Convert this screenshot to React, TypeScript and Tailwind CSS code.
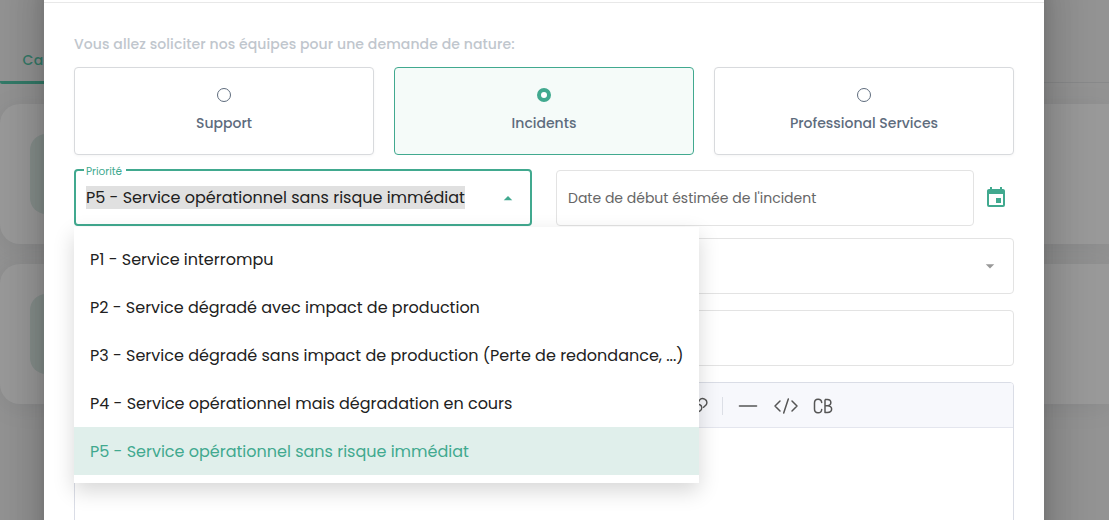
import { useState } from "react";

const PRIORITIES = [
  "P1 - Service interrompu",
  "P2 - Service dégradé avec impact de production",
  "P3 - Service dégradé sans impact de production (Perte de redondance, ...)",
  "P4 - Service opérationnel mais dégradation en cours",
  "P5 - Service opérationnel sans risque immédiat",
];

const NATURES = ["Support", "Incidents", "Professional Services"];

function BackgroundPage() {
  return (
    <div className="flex h-full flex-col bg-[#f5f5f5]">
      <div className="flex h-[83px] shrink-0 items-end border-b border-[#e3e5e7]">
        <div className="-mb-[2px] flex h-[46px] w-[180px] items-center rounded-l-[2px] border-b-[3px] border-[#55cbae] pt-[2px] pl-[22.5px] text-[14px] font-medium tracking-[0.5px] text-[#55cbae]">
          Cal
        </div>
      </div>
      <div className="mt-[21px] flex flex-col gap-5">
        {[0, 1].map((i) => (
          <div key={i} className="flex h-[140px] items-center rounded-l-[20px] bg-white pl-[30px] shadow-[0_4px_25px_rgba(100,110,120,0.1)]">
            <div className="h-[80px] w-[80px] rounded-[16px] bg-[#dfeeea]" />
          </div>
        ))}
      </div>
    </div>
  );
}

function NatureCard({ text, active, onSelect }: { text: string; active: boolean; onSelect: () => void }) {
  return (
    <button
      onClick={onSelect}
      className={`flex h-[88px] flex-1 flex-col items-center rounded-[4px] border pt-5 ${active ? "border-[#41a98f] bg-[#f5fbf9]" : "border-[#d8dadd] bg-white shadow-[0_1px_3px_rgba(0,0,0,0.04)]"}`}
    >
      <span className={`size-[14px] rounded-full bg-white ${active ? "border-4 border-[#41a98f]" : "border border-[#5e6c7d]"}`} />
      <span className="mt-[11px] text-[14px] leading-5 font-medium whitespace-nowrap text-[#5e6c7d]">{text}</span>
    </button>
  );
}

function PrioritySelect() {
  const [selected, setSelected] = useState(4);
  return (
    <div className="relative -mt-px flex h-[57px] w-[458px] items-center justify-between rounded-[4px] border-2 border-[#41a98f] px-[10px]">
      <span className="absolute -top-[7px] left-[8px] bg-white pr-[4px] pl-[2px] text-[10.5px] leading-4 text-[#41a98f]">Priorité</span>
      <span className="mb-px bg-[#e0e0e0] text-[16px] leading-[23px] whitespace-nowrap text-[#212121]">{PRIORITIES[selected]}</span>
      <svg viewBox="0 0 24 24" className="mt-px size-6 fill-[#41a98f]">
        <path d="M7,14.5L12,9.5L17,14.5H7Z" transform="translate(1.8 1.8) scale(.85)" />
      </svg>
      <ul className="absolute top-[56px] -left-[2px] z-10 w-[625px] bg-white py-2 shadow-[0_8px_20px_rgba(0,0,0,0.16)]">
        {PRIORITIES.map((p, i) => (
          <li
            key={p}
            onClick={() => setSelected(i)}
            className={`flex h-12 items-center px-4 pt-[2px] text-[16px] whitespace-nowrap ${i === selected ? "bg-[#e0efeb] text-[#41a98f]" : "text-[#212121]"}`}
          >
            <span>{p}</span>
          </li>
        ))}
      </ul>
    </div>
  );
}

function EditorToolbar() {
  return (
    <div className="flex h-[45px] items-center rounded-t-[3px] border-b border-[#e4e6ee] bg-[#f7f8fc] pt-[2px] pl-[613px]">
      <svg viewBox="0 0 20 24" className="h-6 w-5 fill-none stroke-[#555] stroke-[1.4]">
        <path d="M10 9 L11.5 6.2 C14 2.8 20.5 5.5 18.4 10.5 L15.6 13.2 M11.5 10.5 C14.6 12 14.4 15 12 17 L8 19" strokeLinecap="round" />
      </svg>
      <span className="ml-[14px] h-[18px] w-px bg-[#dcdfe6]" />
      <svg viewBox="0 0 20 24" className="ml-[15px] h-6 w-5 stroke-[#555] stroke-[1.6]">
        <path d="M1.5 12H18.5" strokeLinecap="round" />
      </svg>
      <svg viewBox="0 0 26 24" className="ml-[15px] h-6 w-[26px] fill-none stroke-[#555] stroke-[1.5]">
        <path d="M7 7L2 12L7 17M19 7L24 12L19 17M15.3 5L10.7 19" strokeLinecap="round" strokeLinejoin="round" />
      </svg>
      <svg viewBox="0 0 20 24" className="ml-[14px] h-6 w-5 fill-none stroke-[#555] stroke-[1.5]">
        <path d="M8.7 8.5C8.3 4 1.5 4 1.5 9V15C1.5 20 8.3 20 8.7 15.5" strokeLinecap="round" />
        <path d="M12 5.5V18.5H14.5C20 18.5 20 11.7 14.5 11.7H12M12 5.5H14.3C19 5.5 19 11.7 14.5 11.7" strokeLinejoin="round" />
      </svg>
    </div>
  );
}

export default function App() {
  const [nature, setNature] = useState(1);
  return (
    <div className="relative h-[520px] w-full overflow-hidden font-['Poppins','Inter',sans-serif]">
      <BackgroundPage />
      <div className="absolute inset-0 flex justify-center bg-black/40 pr-[21px]">
        <div className="-mt-10 flex h-[640px] w-[1000px] shrink-0 flex-col bg-white shadow-[0_11px_15px_-7px_rgba(0,0,0,0.2),0_24px_38px_3px_rgba(0,0,0,0.14),0_9px_46px_8px_rgba(0,0,0,0.12)]">
          <div className="h-[43px] shrink-0 border-b border-[#e8e8e8]" />
          <div className="flex flex-1 flex-col px-[30px] pt-[31px]">
            <p className="h-5 text-[14px] leading-5 font-medium tracking-[0.1px] whitespace-nowrap text-[#c0c6cd]">
              Vous allez soliciter nos équipes pour une demande de nature:
            </p>
            <div className="mt-[13px] flex gap-5">
              {NATURES.map((n, i) => (
                <NatureCard key={n} text={n} active={i === nature} onSelect={() => setNature(i)} />
              ))}
            </div>
            <div className="mt-[15px] flex h-14 items-center">
              <PrioritySelect />
              <div className="ml-6 flex h-14 w-[418px] items-center rounded-[4px] border border-[#e3e3e3] px-[11px] text-[14px] text-[#666]">
                <span>Date de début éstimée de l'incident</span>
              </div>
              <svg viewBox="0 0 24 24" className="ml-[10px] size-6 fill-[#41a98f]">
                <path d="M19,19H5V8H19M16,1V3H8V1H6V3H5C3.89,3 3,3.89 3,5V19A2,2 0 0,0 5,21H19A2,2 0 0,0 21,19V5C21,3.89 20.1,3 19,3H18V1M17,12H12V17H17V12Z" />
              </svg>
            </div>
            <div className="mt-3 flex h-14 items-center justify-end rounded-[4px] border border-[#e3e3e3] pr-[11px]">
              <svg viewBox="0 0 24 24" className="size-6 fill-[#999]">
                <path d="M7,10L12,15L17,10H7Z" transform="translate(1.8 1.8) scale(.85)" />
              </svg>
            </div>
            <div className="mt-4 h-14 rounded-[4px] border border-[#e3e3e3]" />
            <div className="mt-4 flex-1 rounded-t-[4px] border border-[#dadde6]">
              <EditorToolbar />
            </div>
          </div>
        </div>
      </div>
    </div>
  );
}
